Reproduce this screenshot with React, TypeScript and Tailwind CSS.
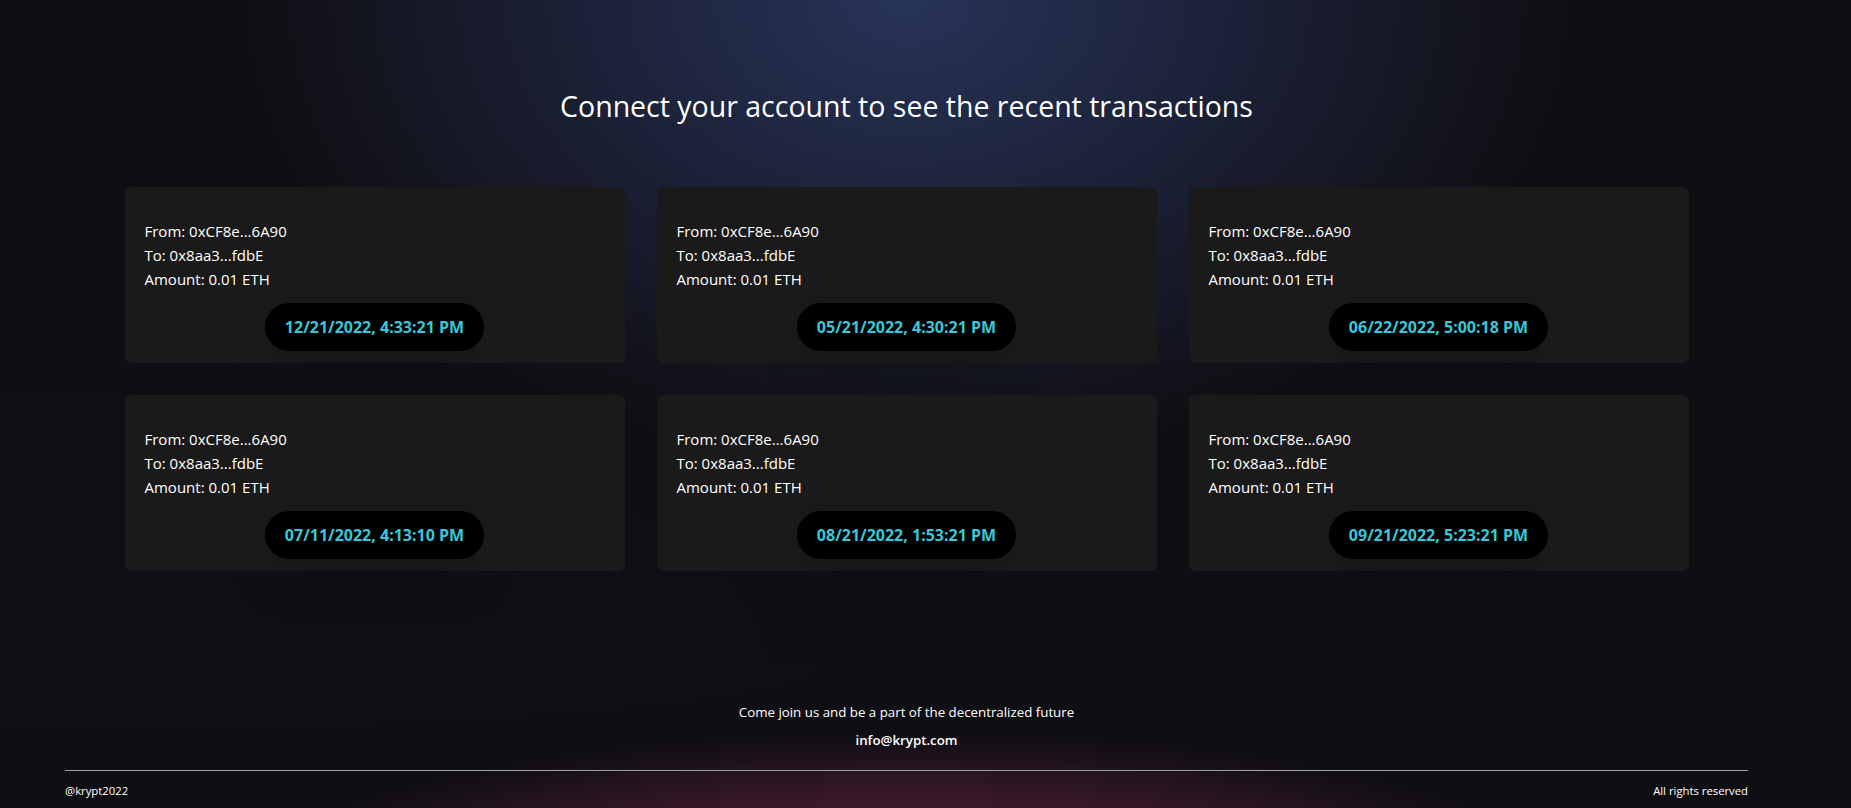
import React from "react";

const txs = [
  "12/21/2022, 4:33:21 PM",
  "05/21/2022, 4:30:21 PM",
  "06/22/2022, 5:00:18 PM",
  "07/11/2022, 4:13:10 PM",
  "08/21/2022, 1:53:21 PM",
  "09/21/2022, 5:23:21 PM",
];

function Card({ ts }: { ts: string }) {
  return (
    <div className="bg-[#1a1a1a] rounded-md p-3 flex flex-col h-[176px]">
      <div className="flex flex-col items-center w-full mt-3">
        <div className="w-full mb-6 p-2">
          <p className="text-white text-[15px] leading-6">From: 0xCF8e...6A90</p>
          <p className="text-white text-[15px] leading-6">To: 0x8aa3...fdbE</p>
          <p className="text-white text-[15px] leading-6">Amount: 0.01 ETH</p>
        </div>
        <div className="bg-black py-3 px-5 w-max rounded-3xl -mt-5 shadow-2xl">
          <p className="text-[#37c7da] font-bold text-base leading-6">{ts}</p>
        </div>
      </div>
    </div>
  );
}

export default function App() {
  return (
    <div className="h-screen w-full overflow-hidden bg-[#0f0e13] font-['Open_Sans',sans-serif]">
      <section className="h-[666px] w-full bg-[#0f0e13] bg-[radial-gradient(at_0%_100%,hsla(253,16%,7%,1)_0,transparent_50%),radial-gradient(at_49%_0%,hsla(225,39%,25%,1)_0,transparent_50%)]">
        <div className="w-[1813px] flex flex-col items-center pt-[88px]">
          <h3 className="text-white text-[28.5px] leading-9 text-center">
            Connect your account to see the recent transactions
          </h3>
          <div className="grid grid-cols-[repeat(3,500px)] gap-8 mt-[63px]">
            {txs.map((t) => (
              <Card key={t} ts={t} />
            ))}
          </div>
        </div>
      </section>
      <footer className="w-full bg-[#0f0e13] bg-[radial-gradient(at_0%_0%,hsla(253,16%,7%,1)_0,transparent_53%),radial-gradient(at_49%_150%,hsla(339,49%,30%,1)_0,transparent_50%)] pt-4 pb-4">
        <div className="w-[1813px] px-[65px] flex flex-col">
          <div className="flex flex-col items-center mt-5">
            <p className="text-white text-[13.3px] leading-5 text-center">
              Come join us and be a part of the decentralized future
            </p>
            <p className="text-white text-[13.3px] leading-5 text-center font-semibold mt-2">
              info@krypt.com
            </p>
          </div>
          <div className="w-full h-px bg-gray-400 mt-5" />
          <div className="w-full flex justify-between items-center mt-3">
            <p className="text-white text-[11.3px] leading-4">@krypt2022</p>
            <p className="text-white text-[11.3px] leading-4">All rights reserved</p>
          </div>
        </div>
      </footer>
    </div>
  );
}
